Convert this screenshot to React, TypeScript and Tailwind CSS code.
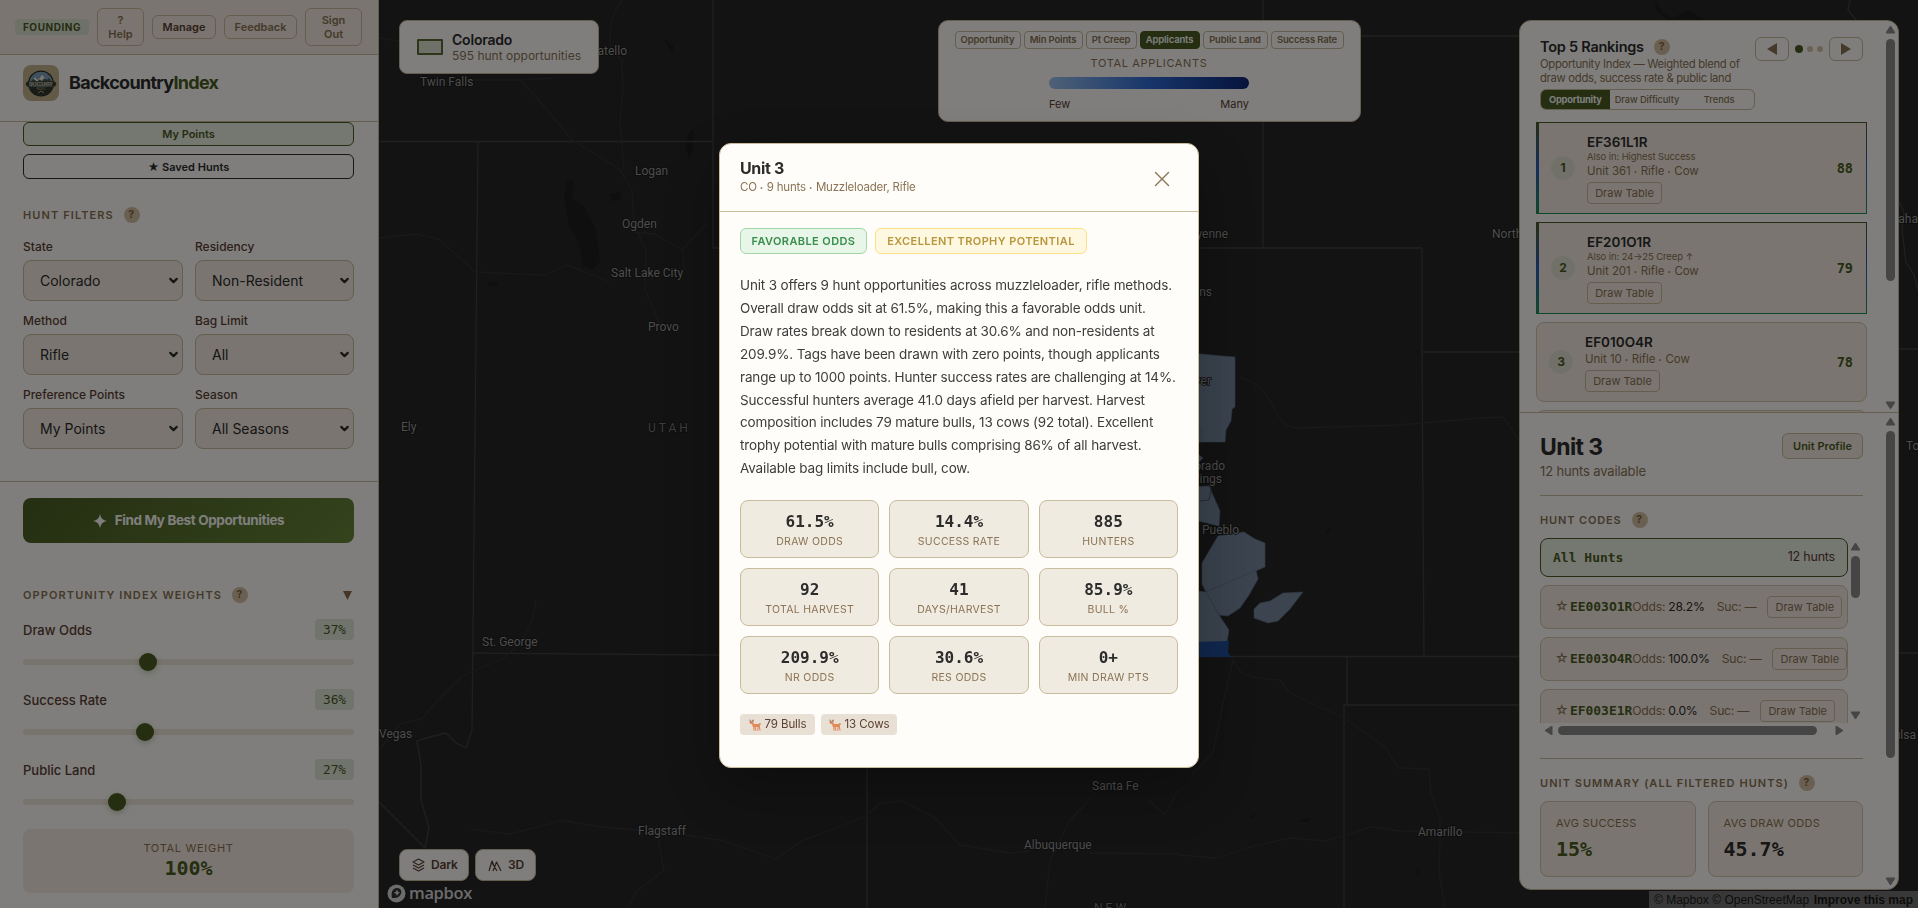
import type { ReactNode } from "react";
import clsx from "clsx";
import { ChevronDown } from "lucide-react";

const mono = "font-['DejaVu_Sans_Mono',monospace]";

const filters = [
  ["State", "Colorado"],
  ["Residency", "Non-Resident"],
  ["Method", "Rifle"],
  ["Bag Limit", "All"],
  ["Preference Points", "My Points"],
  ["Season", "All Seasons"],
];

const weights = [
  { label: "Draw Odds", value: 37 },
  { label: "Success Rate", value: 36 },
  { label: "Public Land", value: 27 },
];

const layers = [
  { label: "Opportunity", width: "w-[66px]" },
  { label: "Min Points", width: "w-[59px]" },
  { label: "Pt Creep", width: "w-[51px]" },
  { label: "Applicants", width: "w-[60px]" },
  { label: "Public Land", width: "w-[65px]" },
  { label: "Success Rate", width: "w-[73px]" },
];

const rankings = [
  { code: "EF361L1R", also: "Also in: Highest Success", unit: ["Unit 361", "Rifle", "Cow"], score: 88 },
  { code: "EF201O1R", also: "Also in: 24→25 Creep ↑", unit: ["Unit 201", "Rifle", "Cow"], score: 79 },
  { code: "EF010O4R", also: "", unit: ["Unit 10", "Rifle", "Cow"], score: 78 },
];

const huntCodes = [
  { code: "EE003O1R", odds: "28.2%" },
  { code: "EE003O4R", odds: "100.0%" },
  { code: "EF003E1R", odds: "0.0%" },
];

const stats = [
  ["61.5%", "Draw Odds"],
  ["14.4%", "Success Rate"],
  ["885", "Hunters"],
  ["92", "Total Harvest"],
  ["41", "Days/Harvest"],
  ["85.9%", "Bull %"],
  ["209.9%", "NR Odds"],
  ["30.6%", "Res Odds"],
  ["0+", "Min Draw Pts"],
];

const summary = [
  "Unit 3 offers 9 hunt opportunities across muzzleloader, rifle methods.",
  "Overall draw odds sit at 61.5%, making this a favorable odds unit.",
  "Draw rates break down to residents at 30.6% and non-residents at",
  "209.9%. Tags have been drawn with zero points, though applicants",
  "range up to 1000 points. Hunter success rates are challenging at 14%.",
  "Successful hunters average 41.0 days afield per harvest. Harvest",
  "composition includes 79 mature bulls, 13 cows (92 total). Excellent",
  "trophy potential with mature bulls comprising 86% of all harvest.",
  "Available bag limits include bull, cow.",
];

function Help() {
  return (
    <span className="flex h-4 w-4 shrink-0 items-center justify-center rounded-full bg-[#d4c0a4] text-[10.500px] font-bold text-[#85653f]">
      ?
    </span>
  );
}

function Heading({ children, className }: { children: ReactNode; className?: string }) {
  return (
    <div className={clsx("flex h-4 items-center whitespace-nowrap text-[11px] font-semibold uppercase text-[#8b7355]", className)}>
      {children}
    </div>
  );
}

// bullet separated meta line
function Meta({ items }: { items: string[] }) {
  return (
    <>
      {items.map((item, i) => (
        <span key={item}>
          {i > 0 && <span className="mx-[3px] inline-block w-[4px] align-[1px] text-[6px] leading-none">•</span>}
          {item}
        </span>
      ))}
    </>
  );
}

function Arrow({ dir }: { dir: "up" | "down" | "left" | "right" }) {
  const points = {
    up: "4.5,1 9,8 0,8",
    down: "0,1 9,1 4.5,8",
    left: "8,0 8,9 1,4.5",
    right: "1,0 8,4.5 1,9",
  };
  return (
    <svg width="9" height="9" className="shrink-0">
      <polygon points={points[dir]} fill="#8b8b8b" stroke="#8b8b8b" strokeLinejoin="round" />
    </svg>
  );
}

function TopBar() {
  return (
    <div className="flex h-[55px] shrink-0 items-center gap-2 border-b border-[#c9bc9c] bg-[#f5ebe0] pl-[15px] text-center text-[11px] font-semibold leading-[14px] text-[#8b7355]">
      <span className="h-4 w-[74px] rounded bg-[#dde3d0] text-[10px] font-bold leading-4 tracking-[0.550px] text-[#4a5d23]">
        FOUNDING
      </span>
      <button className="h-[38px] w-[47px] rounded-md border border-[#c9bc9c]">
        ?<br />
        Help
      </button>
      <button className="h-6 w-16 rounded-md border border-[#c9bc9c] text-[#5c4033]">Manage</button>
      <button className="h-6 w-[73px] rounded-md border border-[#c9bc9c]">Feedback</button>
      <button className="h-[38px] w-[57px] rounded-md border border-[#c9bc9c]">
        Sign
        <br />
        Out
      </button>
    </div>
  );
}

function Logo() {
  return (
    <svg width="36" height="36" viewBox="0 0 36 36">
      <rect width="36" height="36" rx="8" fill="#c4b48f" />
      <circle cx="18" cy="18.500" r="13" fill="#2a2d24" />
      <circle cx="18" cy="18.500" r="11.800" fill="#7fa3b8" />
      <path d="M6.500 18 L12 12 L15 15 L19 9.500 L24 15 L26 13 L29.500 18 Z" fill="#47564d" />
      <path d="M10.500 14 L12 12 L15 15 L19 9.500 L23 14 L21 13.500 L19 16 L16.500 14.500 L14 16.500 Z" fill="#e8ecec" />
      <path d="M4 16.500 H32 L33.500 19 L32 21.500 H4 L2.500 19 Z" fill="#3a3d30" />
      <path d="M6.500 22 H29.500 Q27 30.300 18 30.300 Q9 30.300 6.500 22 Z" fill="#30382a" />
      <text x="18" y="20.800" textAnchor="middle" textLength="24" fontSize="4.500" fontWeight="700" fill="#b9b9a6">
        BACKCOUNTRY
      </text>
      <text x="18" y="25" textAnchor="middle" fontSize="3" fill="#a8a890">
        INDEX
      </text>
      <path d="M15 28 L18 26 L21 28" stroke="#a8a890" fill="none" />
    </svg>
  );
}

function Sidebar() {
  return (
    <aside className="flex h-full w-[379px] shrink-0 flex-col overflow-hidden border-r border-[#c9bc9c] bg-[#fefdf9]">
      <TopBar />
      <div className="flex h-[67px] shrink-0 items-start gap-[10px] border-b border-[#c9bc9c] pl-[23px] pt-[10px]">
        <Logo />
        <div className="text-[18px] font-bold leading-[36px] tracking-[-0.700px] text-[#2c2c2c]">
          Backcountry<span className="text-[#4a5d23]">Index</span>
        </div>
      </div>

      <div className="flex flex-col gap-2 pl-[23px] pr-6 text-center text-[11px] font-semibold">
        <div className="h-6 rounded-md border border-[#4a5d23] bg-[#ebeee3] leading-[22px] text-[#4a5d23]">My Points</div>
        <div className="h-[25px] rounded-md border border-[#2c2c2c] leading-[24px] text-[#2c2c2c]">★ Saved Hunts</div>
      </div>

      <div className="mt-7 h-[275px] shrink-0 border-b border-[#c9bc9c] pl-[23px]">
        <Heading className="gap-[10px] tracking-[1.100px]">
          <span>Hunt Filters</span>
          <Help />
        </Heading>
        <div className="mt-[14px] grid grid-cols-[160px_159px] gap-x-3 gap-y-[10px]">
          {filters.map(([label, value]) => (
            <label key={label} className="flex h-16 flex-col text-[12px] font-medium text-[#5c4033]">
              <span className="mb-1 leading-[19px]">{label}</span>
              <span className="flex h-[41px] items-center justify-between rounded-lg border border-[#c9bc9c] bg-[#f5ebe0] pl-4 pr-[2px] text-[14px] font-normal text-[#2c2c2c]">
                {value}
                <ChevronDown size={13} strokeWidth={4} />
              </span>
            </label>
          ))}
        </div>
      </div>

      <div className="pl-[23px] pr-6 pt-4">
        <button className="flex h-[45px] w-full items-center justify-center gap-2 rounded-lg bg-linear-135 from-[#4a5d23] to-[#68883a] text-[13.500px] font-bold tracking-[-0.380px] text-[#fefdf9]">
          <svg width="14" height="14" viewBox="0 0 14 14">
            <path d="M7 0 Q8 6 14 7 Q8 8 7 14 Q6 8 0 7 Q6 6 7 0Z" fill="#fefdf9" />
          </svg>
          Find My Best Opportunities
        </button>
      </div>

      <div className="mt-11 pl-[23px] pr-6">
        <Heading className="justify-between">
          <span className="flex items-center gap-[10px] tracking-[1.100px]">
            Opportunity Index Weights <Help />
          </span>
          <svg width="9" height="9" className="mr-[2px]">
            <polygon points="0,0 9,0 4.5,9" fill="#8b6a4c" />
          </svg>
        </Heading>
        <div className="mt-4 flex flex-col">
          {weights.map((w) => (
            <div key={w.label} className="h-[70px]">
              <div className="flex items-center justify-between">
                <span className="pt-[2px] text-[13px] font-medium text-[#5c4033]">{w.label}</span>
                <span className={clsx("h-[21px] w-[39px] rounded bg-[#e3e6da] text-center text-[12.800px] leading-[21px] text-[#4a5d23]", mono)}>
                  {w.value}%
                </span>
              </div>
              <div className="mt-[18px] flex h-[6px] items-center rounded-full bg-[#efe6da] pr-[18px]">
                <span className="shrink-0" style={{ width: `${w.value}%` }} />
                <span className="h-[18px] w-[18px] shrink-0 rounded-full bg-[#4a5d23] shadow-[0_2px_6px_rgba(74,93,35,0.3)]" />
              </div>
            </div>
          ))}
        </div>
        <div className="h-16 rounded-lg bg-[#f5ebe0] pt-[11px] text-center">
          <div className="text-[11px] leading-4 tracking-[0.700px] text-[#8b7355]">TOTAL WEIGHT</div>
          <div className={clsx("text-[20px] font-bold leading-6 text-[#4a5d23]", mono)}>100%</div>
        </div>
      </div>
    </aside>
  );
}

const cities: [string, number, number, "start" | "end"][] = [
  ["Twin Falls", 420, 86, "start"],
  ["Pocatello", 627, 55, "end"],
  ["Logan", 635, 175, "start"],
  ["Ogden", 622, 228, "start"],
  ["Salt Lake City", 611, 277, "start"],
  ["Provo", 648, 331, "start"],
  ["Ely", 401, 431, "start"],
  ["St. George", 482, 646, "start"],
  ["Vegas", 379, 738, "start"],
  ["Flagstaff", 638, 835, "start"],
  ["Albuquerque", 1024, 849, "start"],
  ["Santa Fe", 1092, 790, "start"],
  ["Amarillo", 1418, 836, "start"],
  ["Pueblo", 1202, 534, "start"],
  ["Colorado", 1225, 470, "end"],
  ["Springs", 1222, 483, "end"],
  ["Denver", 1211, 385, "end"],
  ["Cheyenne", 1228, 238, "end"],
  ["Collins", 1212, 296, "end"],
  ["North Platte", 1492, 238, "start"],
  ["Omaha", 1918, 223, "end"],
  ["Topeka", 1906, 450, "start"],
  ["Tulsa", 1916, 739, "end"],
];

function MapCanvas() {
  return (
    <svg className="absolute inset-0 h-full w-full" viewBox="379 0 1539 908">
      <rect x="379" width="1539" height="908" fill="#262626" />
      <g fill="#1e1e1e">
        <path d="M567 178 L574 181 L572 198 L584 206 L596 230 L600 262 L592 270 L583 262 L578 240 L570 228 L564 200Z" />
        <path d="M610 194 L620 192 L621 200 L612 201Z M688 135 L694 128 L693 150 L689 158 L685 148Z" />
        <path d="M662 36 L672 46 L675 40 L672 53Z M582 254 L592 255 L594 266 L583 267Z M488 283 L498 282 L496 286 L488 286Z" />
        <path d="M1250 817 L1256 814 L1253 819Z M1296 821 L1312 818 L1308 822Z M1326 531 L1331 528 L1328 534Z" />
        <path d="M1655 0 L1662 12 L1672 18 L1690 10 L1704 20 H1668 L1656 10Z M1416 872 L1419 865 L1418 876Z" />
      </g>
      <g fill="none" stroke="#414141" strokeWidth="1.300">
        <path d="M379 141.500 H713 M713 0 V248 H1422 M478 141.500 L472 730 L466 748 L456 743 L446 733 L430 737 L417 741 L421 765 L421 800 L429 828 L425 848" />
        <path d="M472 653 L719 655 L1199 656.500 H1519 M867 655 V908 M1263 0 V248 M1263 36 H1519 M1422 248 V352 L1424 656 M1422 352 H1519" />
        <path d="M1347 656 V705 M1344 908 V705 H1519 M1898 349 H1918 M1898 653 H1918 M379 802 L425 848" />
        <path d="M1850 0 L1848 10 L1856 20 M1898 200 L1904 212 L1902 230 L1906 262 L1914 275 L1918 290" />
      </g>
      <g fill="none" stroke="#323232" strokeWidth="1.300">
        <path d="M622 0 Q606 20 611 50 L622 60 L623 90 L620 120 L624 170" />
        <path d="M379 38 L400 41 M471 80 H520 L554 78 M520 80 L545 107 L572 140 L605 160 L620 170 L632 190 L634 225 L646 250 L645 290 L655 313 L660 325" />
        <path d="M379 238 L417 234 L439 239 L475 272 L545 275 L567 265 L610 282 M634 232 L655 234 L670 243 L682 250 L706 224 M682 250 L685 270" />
        <path d="M536 600 Q532 640 500 660 L462 676 L438 700 L422 719 L400 724 L379 750 M470 829 L510 834 L550 824 L560 820 L600 827 L638 830" />
        <path d="M683 835 L720 840 L776 859 L800 842 L866 816 L880 803 L902 801 L935 818 L960 845 L1010 853 L1030 851 M658 838 L664 870 L636 892 L628 908" />
        <path d="M1240 377 Q1258 383 1267 396 L1280 418 Q1287 428 1296 428 L1400 425 L1480 418 L1503 417 L1519 440" />
        <path d="M1231 657 L1240 671 Q1250 679 1280 680 L1290 693 L1315 705 L1343 717 L1385 747 L1398 768 L1429 769 L1431 794 L1440 818 L1440 845 L1439 872 L1445 908" />
        <path d="M1233 660 L1224 699 L1213 753 L1190 777 M1180 855 L1216 858 L1250 847 L1290 838 L1325 841 L1372 827 L1400 831 L1519 833" />
        <path d="M1092 797 L1070 820 L1050 860 L1045 908 M1090 853 L1180 854 M1148 800 L1165 815 L1178 790" />
      </g>
      <g fill="#76889f" stroke="#5f7186" strokeWidth="0.600">
        <path d="M1190 353 L1222 356 L1235 357 V407 L1232 409 L1231 421 L1226 430 L1225 442 H1190Z" />
        <path d="M1190 487 L1209 486 L1220 511 L1219 526 L1190 519Z" />
        <path d="M1218 536 L1244 532 L1255 539 L1265 543 V567 L1206 592 L1202 584 L1202 563Z" />
        <path d="M1206 592 L1256 570 L1258 579 L1249 595 L1240 608 L1228 616 L1219 615Z" />
        <path d="M1190 590 L1206 592 L1219 615 L1229 630 L1227 642 L1190 644Z" />
        <path d="M1254 609 L1260 603 L1270 601 L1283 593 L1303 592 L1290 609 L1278 621 L1268 623 L1254 618Z" />
        <path d="M1199 425 L1201 430 V442 H1199Z M1199 455 L1203 458 L1199 462Z" />
      </g>
      <path d="M1208 478 L1211 490 L1209 500 L1200 501" fill="none" stroke="#4c5b6c" />
      <path d="M1190 642 L1229 641 L1228 652 L1231 657 H1190Z" fill="#21509f" />
      <g fill="#9a9a9a" stroke="#1a1a1a" strokeWidth="1.500" paintOrder="stroke" fontSize="12" className="font-[Roboto,sans-serif]">
        {cities.map(([name, x, y, anchor]) => (
          <text key={name} x={x} y={y} textAnchor={anchor}>
            {name}
          </text>
        ))}
        <text x="648" y="432" letterSpacing="3" fill="#7c7c7c">UTAH</text>
        <text x="1094" y="912" letterSpacing="3" fill="#7c7c7c">NEW</text>
      </g>
    </svg>
  );
}

function MapControls() {
  return (
    <>
      <div className="absolute left-5 top-5 flex h-[54px] w-[200px] items-center gap-[9px] rounded-lg border border-[#c9bc9c] bg-[#fefdf9] pl-[17px]">
        <span className="h-4 w-[26px] rounded-[1px] border-2 border-[#5a6b35] bg-[#dfe3d3]" />
        <div className="pt-px leading-4">
          <div className="text-[14px] font-semibold tracking-[-0.200px] text-[#2c2c2c]">Colorado</div>
          <div className="whitespace-nowrap text-[12px] text-[#8b7355]">595 hunt opportunities</div>
        </div>
      </div>

      <div className="absolute left-[559px] top-5 flex h-[102px] w-[423px] flex-col items-center rounded-[10px] border border-[#c9bc9c] bg-[#fefdf9] pr-px pt-[10px]">
        <div className="flex gap-[3px] text-[9.500px] font-semibold">
          {layers.map((l) => (
            <span
              key={l.label}
              className={clsx(
                "h-[18px] whitespace-nowrap rounded border text-center leading-4 tracking-[-0.150px]",
                l.width,
                l.label === "Applicants" ? "border-[#4a5d23] bg-[#4a5d23] text-[#fefdf9]" : "border-[#c9bc9c] text-[#8b7355]",
              )}
            >
              {l.label}
            </span>
          ))}
        </div>
        <div className="mt-[6px] text-[11px] leading-4 tracking-[0.650px] text-[#8b7355]">TOTAL APPLICANTS</div>
        <div className="mt-[6px] h-3 w-[200px] rounded-full bg-linear-to-r from-[#9fc3ee] via-[#2f6bd6] to-[#10287a]" />
        <div className="mt-[7px] flex w-[200px] justify-between text-[11px] leading-4 text-[#5c4033]">
          <span>Few</span>
          <span>Many</span>
        </div>
      </div>

      <div className="absolute bottom-[27px] left-5 flex gap-[6px] text-[12px] font-semibold tracking-[-0.200px] text-[#5c4033]">
        <div className="flex h-8 w-[70px] items-center gap-[6px] rounded-lg border border-[#c9bc9c] bg-[#fefdf9] pl-3">
          <svg width="13" height="14" viewBox="0 0 13 14" fill="none" stroke="#5c4033" strokeWidth="1.200" strokeLinejoin="round">
            <path d="M6.500 1 L12 4 L6.500 7 L1 4Z M1 7 L6.500 10 L12 7 M1 10 L6.500 13 L12 10" />
          </svg>
          Dark
        </div>
        <div className="flex h-8 w-[61px] items-center gap-[6px] rounded-lg border border-[#c9bc9c] bg-[#fefdf9] pl-3">
          <svg width="14" height="13" viewBox="0 0 14 13" fill="none" stroke="#5c4033" strokeWidth="1.200" strokeLinejoin="round">
            <path d="M1 12 L4 2 L6 7 M5 12 L8.500 3 L13 12 M3.500 3 L9 12" />
          </svg>
          3D
        </div>
      </div>

      <div className="absolute bottom-[5px] left-[8px] flex items-center gap-[3px]">
        <svg width="19" height="19" viewBox="0 0 19 19">
          <circle cx="9.500" cy="9.500" r="9" fill="#d8d8d8" />
          <path d="M5 14 C4 9 5 4.500 10 4 C14.500 4 15.500 8.500 13 11.500 C11 14 8 14.300 5 14Z" fill="#333" />
          <path d="M10 5.500 L11 7.800 L13.200 8.700 L11 9.700 L10 12 L9 9.700 L6.800 8.700 L9 7.800Z" fill="#d8d8d8" />
        </svg>
        <span className="font-['Open_Sans',sans-serif] text-[16.500px] font-semibold leading-5 tracking-[-0.350px] text-[#d8d8d8]">mapbox</span>
      </div>

      <div className="absolute bottom-0 right-0 flex h-[17px] w-[269px] items-center justify-between bg-white/35 px-[5px] font-['Liberation_Sans',sans-serif] text-[12px] text-black/80">
        <span>© Mapbox © OpenStreetMap</span>
        <b>Improve this map</b>
      </div>
    </>
  );
}

function DrawTable() {
  return (
    <span className="block h-[22px] w-[75px] shrink-0 whitespace-nowrap rounded border border-[#c9bc9c] text-center text-[11px] leading-5 tracking-normal text-[#8b7355]">
      Draw Table
    </span>
  );
}

function Rankings() {
  return (
    <section className="flex h-[392px] shrink-0 overflow-hidden border-b border-[#c9bc9c]">
      <div className="w-[347px] pl-4 pt-4">
        <div className="flex justify-between pl-1 pr-1">
          <div>
            <div className="flex h-5 items-center gap-[10px]">
              <span className="-mt-px text-[14.500px] font-semibold tracking-[-0.250px] text-[#2c2c2c]">Top 5 Rankings</span>
              <Help />
            </div>
            <div className="whitespace-nowrap text-[11.300px] leading-[14px] tracking-[-0.320px] text-[#8b7355]">
              Opportunity Index — Weighted blend of
              <br />
              draw odds, success rate &amp; public land
            </div>
          </div>
          <div className="flex h-6 items-center gap-[6px]">
            <span className="flex h-6 w-[34px] items-center justify-center rounded-md border border-[#c9bc9c]">
              <svg width="10" height="12"><polygon points="10,0 10,12 0,6" fill="#8b7355" /></svg>
            </span>
            <span className="flex items-center gap-1">
              <i className="h-2 w-2 rounded-full bg-[#4a5d23]" />
              <i className="h-[6px] w-[6px] rounded-full bg-[#d4c4a8]" />
              <i className="h-[6px] w-[6px] rounded-full bg-[#d4c4a8]" />
            </span>
            <span className="flex h-6 w-[34px] items-center justify-center rounded-md border border-[#c9bc9c]">
              <svg width="10" height="12"><polygon points="0,0 0,12 10,6" fill="#8b7355" /></svg>
            </span>
          </div>
        </div>
        <div className="ml-1 mt-1 flex h-[21px] w-[215px] overflow-hidden rounded-md border border-[#c9bc9c] text-center text-[9.300px] font-medium leading-[19px] text-[#8b7355]">
          <span className="w-[69px] bg-[#4a5d23] font-bold tracking-[-0.250px] text-[#fefdf9]">Opportunity</span>
          <span className="w-[75px] tracking-[-0.100px]">Draw Difficulty</span>
          <span className="w-[70px]">Trends</span>
        </div>
        <div className="mt-3 flex w-[331px] flex-col gap-2">
          {rankings.map((r, i) => (
            <div
              key={r.code}
              className={clsx(
                "flex items-center bg-[#f5ebe0]",
                r.also
                  ? "h-[92px] border border-l-[3px] pl-3 [border-image:linear-gradient(to_bottom,#4a5d23,#2a5ab8,#1f8f56)_1]"
                  : "h-20 rounded-lg border border-[#d4c4a8] pl-3",
              )}
            >
              <span className="flex h-6 w-6 items-center justify-center rounded-full bg-[#e3e2d4] text-[12px] font-bold text-[#4a5d23]">{i + 1}</span>
              <div className="ml-3 flex-1 text-[#8b7355]">
                <div className="text-[13.500px] font-semibold leading-[18px] text-[#2c2c2c]">{r.code}</div>
                {r.also && <div className="text-[9.500px] leading-3 tracking-[-0.100px]">{r.also}</div>}
                <div className="mb-[3px] h-4 text-[11.500px] leading-4 tracking-[-0.050px]">
                  <Meta items={r.unit} />
                </div>
                <DrawTable />
              </div>
              <span className={clsx("mr-[13px] text-[13.600px] font-bold text-[#4a5d23]", mono)}>{r.score}</span>
            </div>
          ))}
          <div className="h-10 shrink-0 rounded-lg border border-[#d4c4a8] bg-[#f5ebe0]" />
        </div>
      </div>
      <div className="ml-[19px] flex flex-col items-center pt-1">
        <Arrow dir="up" />
        <span className="mt-[5px] h-[242px] w-[9px] rounded-full bg-[#8b8b8b]" />
        <span className="mb-[2px] mt-auto flex"><Arrow dir="down" /></span>
      </div>
    </section>
  );
}

function UnitDetail() {
  return (
    <section className="flex min-h-0 flex-1 overflow-hidden">
      <div className="ml-5 flex w-[323px] shrink-0 flex-col">
        <div className="flex h-[83px] shrink-0 justify-between border-b border-[#c9bc9c] pt-5">
          <div>
            <div className="text-[23px] font-bold leading-[28px] tracking-[-0.600px] text-[#2c2c2c]">Unit 3</div>
            <div className="mt-[2px] text-[13px] leading-4 tracking-[-0.150px] text-[#8b7355]">12 hunts available</div>
          </div>
          <span className="h-[26px] w-[81px] rounded-md border border-[#c9bc9c] bg-[#f5ebe0] text-center text-[11px] font-semibold leading-6 text-[#4a5d23]">
            Unit Profile
          </span>
        </div>
        <Heading className="mt-4 gap-[10px] tracking-[0.850px]">
          <span>Hunt Codes</span>
          <Help />
        </Heading>
        <div className="mt-[10px] flex h-[185px] shrink-0 gap-[3px]">
          <div className="flex w-[308px] flex-col gap-2 overflow-hidden text-[12.200px] tracking-[-0.250px] text-[#8b7355]">
            <div className="flex h-[39px] shrink-0 items-center justify-between rounded-lg border border-[#4a5d23] bg-[#ebeee3] px-3 text-[12.500px] tracking-[-0.200px] text-[#5c4033]">
              <b className={clsx("text-[13px] tracking-normal text-[#4a5d23]", mono)}>All Hunts</b>
              12 hunts
            </div>
            {huntCodes.map((h) => (
              <div key={h.code} className="flex h-11 shrink-0 items-center overflow-hidden whitespace-nowrap rounded-lg border border-[#d4c4a8] bg-[#f5ebe0] pl-[14px]">
                <span className="w-[15px] shrink-0 text-[13px]">☆</span>
                <b className={clsx("text-[13px] tracking-[-0.050px] text-[#4a5d23]", mono)}>{h.code}</b>
                <span className="mr-3">
                  Odds: <span className="text-[#2c2c2c]">{h.odds}</span>
                </span>
                <span className="mr-[11px]">Suc: —</span>
                <DrawTable />
              </div>
            ))}
          </div>
          <div className="flex flex-col items-center pt-1">
            <Arrow dir="up" />
            <span className="mt-[5px] h-[42px] w-[9px] rounded-full bg-[#8b8b8b]" />
            <span className="mb-[3px] mt-auto flex"><Arrow dir="down" /></span>
          </div>
        </div>
        <div className="mt-[3px] flex h-[9px] w-[308px] shrink-0 items-center px-1">
          <Arrow dir="left" />
          <span className="ml-[5px] h-[9px] w-[259px] rounded-full bg-[#8b8b8b]" />
          <span className="ml-auto flex"><Arrow dir="right" /></span>
        </div>
        <div className="mt-[23px] border-t border-[#c9bc9c]" />
        <Heading className="mt-4 shrink-0 gap-[10px] tracking-[1.050px]">
          <span>Unit Summary (All Filtered Hunts)</span>
          <Help />
        </Heading>
        <div className="mt-[10px] grid shrink-0 grid-cols-2 gap-3 text-[11px] tracking-[0.300px] text-[#8b7355]">
          <div className="h-[76px] rounded-lg border border-[#d4c4a8] bg-[#f5ebe0] pl-[15px] pt-[13px]">
            AVG SUCCESS
            <div className={clsx("mt-[3px] text-[20px] font-bold leading-7 tracking-normal text-[#4a5d23]", mono)}>15%</div>
          </div>
          <div className="h-[76px] rounded-lg border border-[#d4c4a8] bg-[#f5ebe0] pl-[15px] pt-[13px]">
            AVG DRAW ODDS
            <div className={clsx("mt-[3px] text-[20px] font-bold leading-7 tracking-normal text-[#2c2c2c]", mono)}>45.7%</div>
          </div>
          <div className="h-[76px] rounded-lg border border-[#d4c4a8] bg-[#f5ebe0]" />
          <div className="h-[76px] rounded-lg border border-[#d4c4a8] bg-[#f5ebe0]" />
        </div>
      </div>
      <div className="ml-[23px] flex flex-col items-center pt-1">
        <Arrow dir="up" />
        <span className="mt-[5px] h-[327px] w-[9px] rounded-full bg-[#8b8b8b]" />
        <span className="mb-[3px] mt-auto flex"><Arrow dir="down" /></span>
      </div>
    </section>
  );
}

function Deer() {
  return (
    <svg width="12" height="12" viewBox="0 0 12 12" fill="none" stroke="#e08a5b" strokeWidth="1.100" strokeLinecap="round">
      <path d="M0.800 1 L2 2.800 L4.500 2 M1 3 H2.500 L4 1" stroke="#a9806b" />
      <path d="M1.500 4 L3.500 3.800 L4.500 6 H9.500 L11 5" strokeWidth="1.800" />
      <path d="M4.500 7 H10" strokeWidth="2.200" />
      <path d="M4.800 7.500 L5 11.300 M6.200 8 L6.800 11.300 M9 8 L8.800 11.300 M10.300 7.500 L11 11.300" />
    </svg>
  );
}

function UnitModal() {
  return (
    <div className="fixed inset-0 z-50 flex items-center justify-center bg-black/50 pt-[3px]">
      <div className="h-[625px] w-[480px] rounded-xl border border-[#c9bc9c] bg-[#fefdf9] shadow-[0_20px_60px_rgba(0,0,0,0.3)]">
        <div className="flex h-[68px] items-center justify-between border-b border-[#c9bc9c] pb-[3px] pl-5 pr-[27px]">
          <div>
            <div className="text-[16px] font-bold leading-[21px] tracking-[-0.350px] text-[#2c2c2c]">Unit 3</div>
            <div className="h-4 text-[11.500px] leading-4 tracking-[-0.200px] text-[#8b7355]">
              <Meta items={["CO", "9 hunts", "Muzzleloader, Rifle"]} />
            </div>
          </div>
          <svg width="18" height="18" viewBox="0 0 18 18" stroke="#8b7355" strokeWidth="1.400" strokeLinecap="round" className="mt-[6px]">
            <path d="M2.500 2.500 L15.500 15.500 M15.500 2.500 L2.500 15.500" />
          </svg>
        </div>
        <div className="px-5 pt-4">
          <div className="flex gap-2 whitespace-nowrap text-center text-[11px] font-semibold leading-[24px]">
            <span className="h-[26px] w-[127px] rounded-md border border-[#a5d6a7] bg-[#e8f5e9] tracking-[0.400px] text-[#388e4a]">FAVORABLE ODDS</span>
            <span className="h-[26px] w-[212px] rounded-md border border-[#ffe082] bg-[#fff8e1] tracking-[0.400px] text-[#b8963e]">EXCELLENT TROPHY POTENTIAL</span>
          </div>
          <p className="mt-5 whitespace-nowrap text-[13.500px] leading-[22.900px] tracking-[-0.150px] text-[#3d3d3d]">
            {summary.map((line) => (
              <span key={line} className="block">{line}</span>
            ))}
          </p>
          <div className="mt-5 grid grid-cols-3 gap-[10px]">
            {stats.map(([value, label]) => (
              <div key={label} className="h-[58px] rounded-lg border border-[#c9bc9c] bg-[#f0ebe0] pt-[10px] text-center">
                <div className={clsx("text-[16px] font-bold leading-[22px] text-[#2c2c2c]", mono)}>{value}</div>
                <div className="pt-px text-[10.500px] uppercase leading-4 tracking-[0.300px] text-[#8b7355]">{label}</div>
              </div>
            ))}
          </div>
          <div className="mt-5 flex gap-[6px] text-[11.500px] leading-[21px] tracking-[-0.100px] text-[#5c4033]">
            <span className="flex h-[21px] w-[75px] items-center justify-center gap-1 rounded bg-[#e8e0d5]"><Deer />79 Bulls</span>
            <span className="flex h-[21px] w-[76px] items-center justify-center gap-1 rounded bg-[#e8e0d5]"><Deer />13 Cows</span>
          </div>
        </div>
      </div>
    </div>
  );
}

export default function App() {
  return (
    <div className="flex h-[908px] w-[1918px] overflow-hidden bg-[#262626] font-[Inter,sans-serif]">
      <Sidebar />
      <main className="relative flex-1 overflow-hidden">
        <MapCanvas />
        <MapControls />
        <div className="absolute right-[19px] top-5 flex h-[870px] w-[380px] flex-col overflow-hidden rounded-xl border border-[#c9bc9c] bg-[#fefdf9]">
          <Rankings />
          <UnitDetail />
        </div>
      </main>
      <UnitModal />
    </div>
  );
}
